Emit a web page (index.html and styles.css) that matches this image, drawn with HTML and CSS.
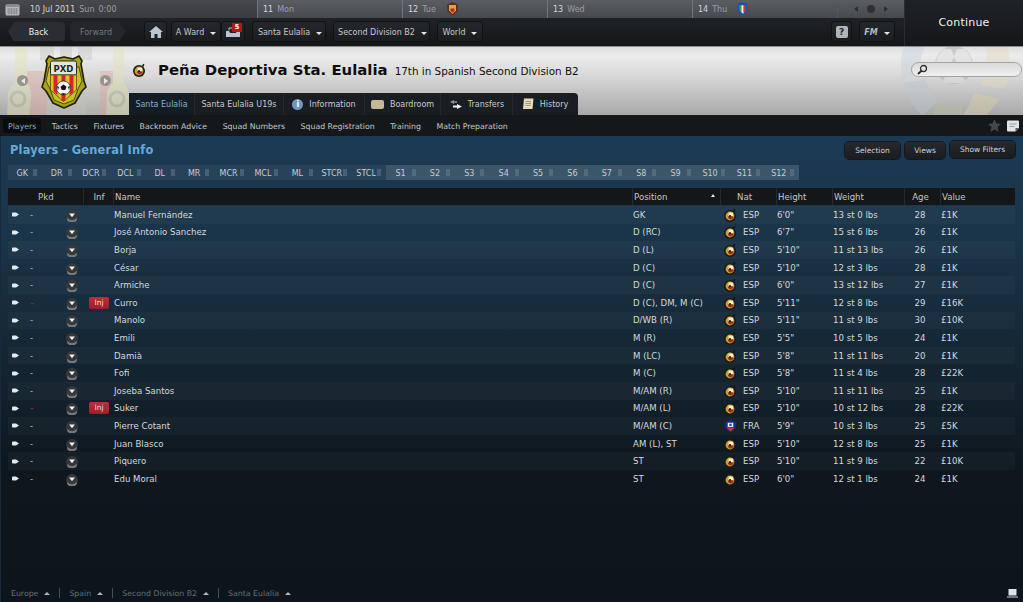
FILE: index.html
```html
<!DOCTYPE html>
<html lang="en">
<head>
<meta charset="utf-8">
<title>Players - General Info</title>
<link rel="stylesheet" href="styles.css">
</head>
<body>
<svg class="defs" width="0" height="0" aria-hidden="true">
  <symbol id="esp" viewBox="0 0 13 14">
    <path d="M9 3 10.200.8l1.200.7L10.200 4z" fill="#15130f"/>
    <circle cx="6" cy="8" r="6" fill="#1c1a12"/>
    <circle cx="6" cy="8" r="4.400" fill="#c4a42a"/>
    <path d="M4 8.500h5.500v1.400L6.500 11.800 4 10.100z" fill="#a8262c"/>
    <path d="M4.600 4.600H9.200v3.400H4.600z" fill="#f4eed6"/>
    <circle cx="6" cy="8.200" r="1.100" fill="#1d1a16"/>
  </symbol>
  <symbol id="fra" viewBox="0 0 14 14">
    <path d="M7 0 10 2l3.500 1-.5 6L7 14 1 9 .5 3l3.500-1z" fill="#152c86"/>
    <path d="M2.500 8.500h9L7 13z" fill="#d02c40"/>
    <path d="M4 3.500h6v4.500H4z" fill="#eef1f8"/>
    <path d="M5.700 4.500h2.600v2.500H5.700z" fill="#2c4ab0"/>
  </symbol>
  <symbol id="dd" viewBox="0 0 10 10">
    <circle cx="5" cy="5" r="5" fill="#35383b"/>
    <path d="M1 6.500a5 5 0 0 0 8 0L9 8.500a5 5 0 0 1-8 0z" fill="#77797b"/>
    <path d="M2.600 3h4.800L5 6z" fill="#f2f2f2"/>
  </symbol>
  <symbol id="row" viewBox="0 0 7 5">
    <path d="M0 1.200Q0 .5.800.5H4L7 2.500 4 4.500H.8Q0 4.500 0 3.800z" fill="#e6e9ec"/>
  </symbol>
</svg>

<div class="top">
  <div class="top-main">
    <div class="calendar">
      <div class="day day-first">
        <svg class="cal-icon" width="15" height="12" viewBox="0 0 15 12"><rect x=".5" y=".5" width="14" height="11" rx="1.500" fill="#b4b8bb"/><rect x=".5" y=".5" width="14" height="2.500" rx="1" fill="#8a8e91"/><path d="M2 5h11M2 7h11M2 9h11M4 4v6.500M6.500 4v6.500M9 4v6.500M11.500 4v6.500" stroke="#7d8184" stroke-width=".7"/></svg>
        <b>10 Jul 2011</b><span>Sun</span><span>0:00</span>
      </div>
      <div class="day day-a"><b>11</b><span>Mon</span></div>
      <div class="day day-a"><b>12</b><span>Tue</span>
        <svg class="match" width="13" height="14" viewBox="0 0 12 14"><path d="M6 .3 9 1.300l2.500 1.500-.5 6.500L6 13.800 1 9.300.5 2.800l2.500-1.500z" fill="#5e2c18"/><path d="M2.500 3h7v5.500L6 12 2.500 8.500z" fill="#dcaa2c"/><path d="M4 6.500h4v2.300L6 10.800 4 8.800z" fill="#bb262a"/></svg>
      </div>
      <div class="day day-a"><b>13</b><span>Wed</span></div>
      <div class="day day-a day-flag"><b>14</b><span>Thu</span>
        <svg class="match" width="11" height="14" viewBox="0 0 10 14"><path d="M.3 1.300 5 .2l4.700 1.100v8.200L5 13.800.3 9.500z" fill="#1f4fb0"/><path d="M1.800 3.200h2.200v7.300L1.800 9z" fill="#2f9e50"/><path d="M4 3.200h2.100v8.500L4 10.500z" fill="#f4f4f4"/><path d="M6.100 3.200h2.200V9l-2.200 1.700z" fill="#cf3039"/></svg>
      </div>
      <div class="pager">
        <i class="tri-l"></i><i class="dot"></i><i class="tri-r"></i>
      </div>
    </div>
    <nav class="navbar">
      <a class="nbtn back">Back</a>
      <a class="nbtn forward">Forward</a>
      <a class="nbtn home"><svg width="14" height="12" viewBox="0 0 14 12"><path d="M7 0 14 6h-2v6H8.500V8h-3v4H2V6H0z" fill="#b9c6d2"/></svg></a>
      <a class="nbtn ward">A Ward<i class="caret"></i></a>
      <a class="nbtn inbox"><svg width="14" height="10" viewBox="0 0 14 10"><path d="M0 4h3l1 2h6l1-2h3v6H0z" fill="#b9c6d2"/><path d="M3 3.500V1h8v2.500" fill="none" stroke="#b9c6d2"/></svg><em class="badge">5</em></a>
      <a class="nbtn club">Santa Eulalia<i class="caret"></i></a>
      <a class="nbtn league">Second Division B2<i class="caret"></i></a>
      <a class="nbtn world">World<i class="caret"></i></a>
      <span class="grow"></span>
      <a class="nbtn help"><span class="q">?</span></a>
      <a class="nbtn fm"><b>FM</b><i class="caret"></i></a>
    </nav>
  </div>
  <div class="continue">Continue</div>
</div>

<header class="hero">
  <svg class="ghost-left" width="130" height="69" viewBox="0 0 130 69">
    <path d="M27 24h20v45H27zM100 24h13v45h-13z" fill="#e2a8a0"/>
    <path d="M47 24h53v45H47z" fill="#dcdcb4" opacity=".35"/>
    <path d="M15 0h12v36q5 6 4 14l-2 19H7l1-19q-1-8 7-14z" fill="#e4e4b0"/>
    <path d="M113 0h11v36q5 6 5 14v19H106l1-19q-1-8 6-14z" fill="#e4e4b0"/>
    <circle cx="18" cy="52" r="7" fill="none" stroke="#b4b49a" stroke-width="3"/>
    <circle cx="117" cy="52" r="7" fill="none" stroke="#b4b49a" stroke-width="3"/>
    <circle cx="66" cy="63" r="20" fill="#c8c8c2"/>
    <path d="M40 0h14v13H40zM60 0h12v13H60zM78 0h14v13H78z" fill="#c6c6c2"/>
  </svg>
  <svg class="ghost-right" width="123" height="69" viewBox="0 0 123 69">
    <path d="M3 0h22a40 40 0 0 0-4 26L2 32Q0 15 3 0z" fill="#c2d0dc"/>
    <path d="M86 0h22q4 20-2 42l-26-4q8-16 6-38z" fill="#e6d8bc"/>
    <path d="M4 36 26 32q4 14 12 22L22 69Q8 55 4 36z" fill="#b8c6d0"/>
    <path d="M74 46l26 6Q92 62 86 69H62q8-10 12-23z" fill="#dccfa6"/>
    <path d="M38 56q14 6 24 0v13H32z" fill="#b4c09c"/>
    <circle cx="54" cy="18" r="19" fill="#a8a8a8"/>
    <path d="M44 2h7l3 8-4 8H36q0-10 8-16zM57 2h7q8 6 8 16H58l-4-8zM46 28h16l4 8H42z" fill="#dedede"/>
  </svg>
  <div class="hero-crest">
    <i class="arrow-btn"><span class="tri-l dark"></span></i>
    <svg class="crest" width="46" height="56" viewBox="0 0 46 56">
      <path d="M5 8 8 3 14 6 23 4 32 6 38 3 41 8 40 11 43 28 45 34 41 38 34 50 23 55 12 50 5 38 1 34 3 28 6 11z" fill="#a8a418" stroke="#1e1e0c" stroke-width="1.600" stroke-linejoin="round"/>
      <path d="M5 28 9 36 13 47 23 51 33 47 37 36 41 28 38 14 8 14z" fill="#c8c41e" stroke="#2c2c10" stroke-width=".8"/>
      <rect x="9.500" y="8" width="26" height="14" rx="1.500" fill="#e4e4df" stroke="#26261a"/>
      <text x="22.500" y="19" text-anchor="middle" class="pxd">PXD</text>
      <path d="M9.500 22h26v15l-13 11.500L9.500 37z" fill="#e2c020" stroke="#26261a" stroke-width=".6"/>
      <path d="M12.500 22h4v20l-4-3.500zM20.500 22h4v26h-4zM28.500 22h4v17l-4 3.500z" fill="#d6262c"/>
      <circle cx="22.500" cy="35" r="7" fill="#f4f4f4" stroke="#222" stroke-width=".7"/>
      <path d="M22.500 31.500l3 2.200-1.200 3.400h-3.600L19.500 33.700zM16 33l2 1-1 3zM29 33l-2 1 1 3zM19.500 41l3-1 3 1-3 1z" fill="#161616"/>
    </svg>
    <i class="arrow-btn"><span class="tri-r dark"></span></i>
  </div>
  <div class="hero-main">
    <div class="title-row">
      <svg class="fed" width="13" height="14"><use href="#esp"/></svg>
      <h1>Peña Deportiva Sta. Eulalia</h1>
      <span class="sub">17th in Spanish Second Division B2</span>
    </div>
    <div class="tabs">
      <a class="tab on">Santa Eulalia</a>
      <a class="tab">Santa Eulalia U19s</a>
      <a class="tab tab-i"><i class="info">i</i>Information</a>
      <a class="tab tab-i"><i class="room"></i>Boardroom</a>
      <a class="tab tab-i"><svg width="13" height="11" viewBox="0 0 13 11"><path d="M5 1 1 3l4 2V3.800h3V2.200H5z" fill="#8d9094"/><path d="M8 5l5 2.500L8 10V8.500H4V6.500h4z" fill="#eef0f2"/></svg>Transfers</a>
      <a class="tab tab-i"><svg width="11" height="13" viewBox="0 0 11 13"><path d="M1 .5h9.500L9.500 11H0z" fill="#e4dcb8"/><path d="M2.500 3.500h5.500M2.500 5.500h5.500M2.500 7.500h5" stroke="#8c8670" stroke-width=".8"/></svg>History</a>
    </div>
  </div>
  <div class="search"><svg width="11" height="11" viewBox="0 0 11 11"><circle cx="6.500" cy="4.500" r="3" fill="none" stroke="#333" stroke-width="1.300"/><path d="M4.300 6.800 1 10" stroke="#222" stroke-width="1.800"/></svg></div>
</header>

<div class="subnav">
  <a class="sub-on">Players</a><a>Tactics</a><a>Fixtures</a><a>Backroom Advice</a><a>Squad Numbers</a><a>Squad Registration</a><a>Training</a><a>Match Preparation</a>
  <span class="grow"></span>
  <svg width="13" height="13" viewBox="0 0 13 13"><path d="M6.500 0 8.400 4.500 13 5 9.500 8l1.100 5-4.100-2.600L2.400 13l1.100-5L0 5l4.600-.5z" fill="#45484b"/></svg>
  <svg class="note" width="12" height="12" viewBox="0 0 12 12"><path d="M0 1.500Q0 .5 1 .5h10q1 0 1 1V8L8.500 11.500H1q-1 0-1-1z" fill="#dfe4e8"/><path d="M2.500 4h7M2.500 6.500h5" stroke="#9aa0a5"/><path d="M8.500 11.500V8H12z" fill="#55595c"/></svg>
</div>

<main class="content">
  <div class="title-bar">
    <h2>Players - General Info</h2>
    <div class="actions">
      <a class="act act-sel">Selection</a><a class="act act-views">Views</a><a class="act act-filter">Show Filters</a>
    </div>
  </div>
  <div class="strip">
    <span>GK</span><span>DR</span><span>DCR</span><span>DCL</span><span>DL</span><span>MR</span><span>MCR</span><span>MCL</span><span>ML</span><span>STCR</span><span>STCL</span>
    <span class="s">S1</span><span class="s">S2</span><span class="s">S3</span><span class="s">S4</span><span class="s">S5</span><span class="s">S6</span><span class="s">S7</span><span class="s">S8</span><span class="s">S9</span><span class="s">S10</span><span class="s">S11</span><span class="s">S12</span>
  </div>
  <div class="table">
    <div class="row head">
      <span></span><span class="c-pkd">Pkd</span><span></span><span class="c-inf">Inf</span><span class="sep">Name</span><span class="sep c-pos">Position<i class="sort"></i></span><span class="sep c-nat">Nat</span><span class="sep">Height</span><span class="sep">Weight</span><span class="sep c-age">Age</span><span class="sep">Value</span>
    </div>
    <div class="row"><span class="c-go"><svg width="7" height="5"><use href="#row"/></svg></span><span class="c-dash">-</span><span class="c-dd"><svg width="12" height="12"><use href="#dd"/></svg></span><span></span><span>Manuel Fernández</span><span>GK</span><span class="c-flag"><svg width="13" height="14"><use href="#esp"/></svg>ESP</span><span>6'0"</span><span>13 st 0 lbs</span><span class="c-age">28</span><span>£1K</span></div>
    <div class="row"><span class="c-go"><svg width="7" height="5"><use href="#row"/></svg></span><span class="c-dash">-</span><span class="c-dd"><svg width="12" height="12"><use href="#dd"/></svg></span><span></span><span>José Antonio Sanchez</span><span>D (RC)</span><span class="c-flag"><svg width="13" height="14"><use href="#esp"/></svg>ESP</span><span>6'7"</span><span>15 st 6 lbs</span><span class="c-age">26</span><span>£1K</span></div>
    <div class="row"><span class="c-go"><svg width="7" height="5"><use href="#row"/></svg></span><span class="c-dash">-</span><span class="c-dd"><svg width="12" height="12"><use href="#dd"/></svg></span><span></span><span>Borja</span><span>D (L)</span><span class="c-flag"><svg width="13" height="14"><use href="#esp"/></svg>ESP</span><span>5'10"</span><span>11 st 13 lbs</span><span class="c-age">26</span><span>£1K</span></div>
    <div class="row"><span class="c-go"><svg width="7" height="5"><use href="#row"/></svg></span><span class="c-dash">-</span><span class="c-dd"><svg width="12" height="12"><use href="#dd"/></svg></span><span></span><span>César</span><span>D (C)</span><span class="c-flag"><svg width="13" height="14"><use href="#esp"/></svg>ESP</span><span>5'10"</span><span>12 st 3 lbs</span><span class="c-age">28</span><span>£1K</span></div>
    <div class="row"><span class="c-go"><svg width="7" height="5"><use href="#row"/></svg></span><span class="c-dash">-</span><span class="c-dd"><svg width="12" height="12"><use href="#dd"/></svg></span><span></span><span>Armiche</span><span>D (C)</span><span class="c-flag"><svg width="13" height="14"><use href="#esp"/></svg>ESP</span><span>6'0"</span><span>13 st 12 lbs</span><span class="c-age">27</span><span>£1K</span></div>
    <div class="row"><span class="c-go"><svg width="7" height="5"><use href="#row"/></svg></span><span class="c-dash red">-</span><span class="c-dd"><svg width="12" height="12"><use href="#dd"/></svg></span><span class="c-inj"><em>Inj</em></span><span>Curro</span><span>D (C), DM, M (C)</span><span class="c-flag"><svg width="13" height="14"><use href="#esp"/></svg>ESP</span><span>5'11"</span><span>12 st 8 lbs</span><span class="c-age">29</span><span>£16K</span></div>
    <div class="row"><span class="c-go"><svg width="7" height="5"><use href="#row"/></svg></span><span class="c-dash">-</span><span class="c-dd"><svg width="12" height="12"><use href="#dd"/></svg></span><span></span><span>Manolo</span><span>D/WB (R)</span><span class="c-flag"><svg width="13" height="14"><use href="#esp"/></svg>ESP</span><span>5'11"</span><span>11 st 9 lbs</span><span class="c-age">30</span><span>£10K</span></div>
    <div class="row"><span class="c-go"><svg width="7" height="5"><use href="#row"/></svg></span><span class="c-dash">-</span><span class="c-dd"><svg width="12" height="12"><use href="#dd"/></svg></span><span></span><span>Emili</span><span>M (R)</span><span class="c-flag"><svg width="13" height="14"><use href="#esp"/></svg>ESP</span><span>5'5"</span><span>10 st 5 lbs</span><span class="c-age">24</span><span>£1K</span></div>
    <div class="row"><span class="c-go"><svg width="7" height="5"><use href="#row"/></svg></span><span class="c-dash">-</span><span class="c-dd"><svg width="12" height="12"><use href="#dd"/></svg></span><span></span><span>Damià</span><span>M (LC)</span><span class="c-flag"><svg width="13" height="14"><use href="#esp"/></svg>ESP</span><span>5'8"</span><span>11 st 11 lbs</span><span class="c-age">20</span><span>£1K</span></div>
    <div class="row"><span class="c-go"><svg width="7" height="5"><use href="#row"/></svg></span><span class="c-dash">-</span><span class="c-dd"><svg width="12" height="12"><use href="#dd"/></svg></span><span></span><span>Fofi</span><span>M (C)</span><span class="c-flag"><svg width="13" height="14"><use href="#esp"/></svg>ESP</span><span>5'8"</span><span>11 st 4 lbs</span><span class="c-age">28</span><span>£22K</span></div>
    <div class="row"><span class="c-go"><svg width="7" height="5"><use href="#row"/></svg></span><span class="c-dash">-</span><span class="c-dd"><svg width="12" height="12"><use href="#dd"/></svg></span><span></span><span>Joseba Santos</span><span>M/AM (R)</span><span class="c-flag"><svg width="13" height="14"><use href="#esp"/></svg>ESP</span><span>5'10"</span><span>11 st 11 lbs</span><span class="c-age">25</span><span>£1K</span></div>
    <div class="row"><span class="c-go"><svg width="7" height="5"><use href="#row"/></svg></span><span class="c-dash red">-</span><span class="c-dd"><svg width="12" height="12"><use href="#dd"/></svg></span><span class="c-inj"><em>Inj</em></span><span>Suker</span><span>M/AM (L)</span><span class="c-flag"><svg width="13" height="14"><use href="#esp"/></svg>ESP</span><span>5'10"</span><span>10 st 12 lbs</span><span class="c-age">28</span><span>£22K</span></div>
    <div class="row"><span class="c-go"><svg width="7" height="5"><use href="#row"/></svg></span><span class="c-dash">-</span><span class="c-dd"><svg width="12" height="12"><use href="#dd"/></svg></span><span></span><span>Pierre Cotant</span><span>M/AM (C)</span><span class="c-flag"><svg width="13" height="14"><use href="#fra"/></svg>FRA</span><span>5'9"</span><span>10 st 3 lbs</span><span class="c-age">25</span><span>£5K</span></div>
    <div class="row"><span class="c-go"><svg width="7" height="5"><use href="#row"/></svg></span><span class="c-dash">-</span><span class="c-dd"><svg width="12" height="12"><use href="#dd"/></svg></span><span></span><span>Juan Blasco</span><span>AM (L), ST</span><span class="c-flag"><svg width="13" height="14"><use href="#esp"/></svg>ESP</span><span>5'10"</span><span>12 st 8 lbs</span><span class="c-age">25</span><span>£1K</span></div>
    <div class="row"><span class="c-go"><svg width="7" height="5"><use href="#row"/></svg></span><span class="c-dash">-</span><span class="c-dd"><svg width="12" height="12"><use href="#dd"/></svg></span><span></span><span>Piquero</span><span>ST</span><span class="c-flag"><svg width="13" height="14"><use href="#esp"/></svg>ESP</span><span>5'10"</span><span>11 st 9 lbs</span><span class="c-age">22</span><span>£10K</span></div>
    <div class="row"><span class="c-go"><svg width="7" height="5"><use href="#row"/></svg></span><span class="c-dash">-</span><span class="c-dd"><svg width="12" height="12"><use href="#dd"/></svg></span><span></span><span>Edu Moral</span><span>ST</span><span class="c-flag"><svg width="13" height="14"><use href="#esp"/></svg>ESP</span><span>6'0"</span><span>12 st 1 lbs</span><span class="c-age">24</span><span>£1K</span></div>
  </div>
  <footer class="crumbs">
    <a>Europe<i class="up"></i></a><a>Spain<i class="up"></i></a><a>Second Division B2<i class="up"></i></a><a>Santa Eulalia<i class="up"></i></a>
    <span class="grow"></span>
    <svg class="laptop" width="11" height="9" viewBox="0 0 11 9"><rect x="1.500" y="0" width="8" height="6.500" fill="#dfe3e6"/><path d="M0 8h11" stroke="#8d9398" stroke-width="1.500"/></svg>
  </footer>
</main>
</body>
</html>
```
FILE: styles.css
```css
* { box-sizing: border-box; }
html, body { margin: 0; padding: 0; }
body {
  width: 1023px;
  height: 602px;
  overflow: hidden;
  background: #0d151c;
  font-family: "DejaVu Sans", sans-serif;
  font-size: 8.5px;
  color: #d5d9dc;
  display: flex;
  flex-direction: column;
}
.defs { position: absolute; }
a { display: flex; align-items: center; }
i, em { font-style: normal; }
.grow { flex: 1; }

/* top */
.top { display: flex; height: 46px; flex: none; }
.top-main { width: 904px; display: flex; flex-direction: column; }
.calendar { height: 18px; display: flex; background: #4b4e52; }
.day {
  display: flex;
  align-items: center;
  gap: 4px;
  width: 145px;
  padding: 1px 0 0 5px;
  color: #9c9fa3;
  font-size: 8px;
  border-left: 1px solid #71767b;
  background: linear-gradient(#5a5e63, #46494d);
}
.day b { font-weight: normal; color: #d4d6d8; }
.day-first {
  width: 257px;
  border-left: 0;
  padding-left: 5px;
  background: linear-gradient(#46484b, #393b3e);
}
.day-first b { margin-left: 6px; }
.day-flag { width: 145px; }
.match { margin-left: 6px; margin-top: -1px; }
.pager {
  flex: 1;
  display: flex;
  align-items: center;
  justify-content: center;
  gap: 9px;
  background: linear-gradient(#5a5e63, #46494d);
  border-left: 1px solid #55595d;
}
.tri-l { width: 0; height: 0; border: 3px solid transparent; border-left: 0; border-right: 4px solid #2d2f31; }
.tri-r { width: 0; height: 0; border: 3px solid transparent; border-right: 0; border-left: 4px solid #2d2f31; }
.dot { width: 8px; height: 8px; border-radius: 50%; background: #2d2f31; }
.navbar {
  flex: 1;
  display: flex;
  align-items: center;
  padding: 0 10px 0 8px;
  background: linear-gradient(#1f2226, #14161a);
}
.nbtn {
  height: 19px;
  margin-top: -1px;
  padding-top: 1px;
  justify-content: center;
  border-radius: 3px;
  background: linear-gradient(#24272b, #1a1c20);
  box-shadow: 0 0 0 1px #101214;
  color: #c6c9cc;
  font-size: 8px;
  position: relative;
}
.back {
  width: 57px; padding-left: 4px; color: #eef0f1;
  clip-path: polygon(0 50%, 10% 0, 100% 0, 100% 100%, 10% 100%);
  background: #2a2e32;
}
.forward {
  width: 56px; margin-left: 5px; padding-right: 4px; color: #75787b;
  clip-path: polygon(0 0, 88% 0, 100% 50%, 88% 100%, 0 100%);
  background: #24272b;
}
.home { width: 21px; margin-left: 19px; }
.ward { width: 48px; margin-left: 6px; }
.inbox { width: 22px; margin-left: 2px; }
.club { width: 72px; margin-left: 9px; padding-left: 2px; }
.league { width: 95px; margin-left: 9px; padding-left: 2px; }
.world { width: 44px; margin-left: 9px; }
.help { width: 19px; }
.fm { width: 34px; margin-left: 9px; }
.fm b { font-style: italic; font-size: 8px; color: #b5bbc0; }
.q {
  width: 12px; height: 12px; line-height: 12px; text-align: center;
  background: #aeb6bc; color: #23262a; font-weight: bold; font-size: 9px; border-radius: 2px;
}
.caret {
  width: 0; height: 0; margin-left: 6px; margin-top: 2px;
  border: 3px solid transparent; border-bottom: 0; border-top: 3px solid #e4e6e8;
}
.badge {
  position: absolute; right: 2px; top: 1px;
  width: 10px; height: 9px; line-height: 9px; text-align: center;
  background: #b4161e; color: #fff; font-size: 6.5px; font-weight: bold; border-radius: 1px;
}
.continue {
  flex: 1;
  display: flex; align-items: center; justify-content: center;
  background: linear-gradient(#1f2226, #15171a);
  color: #f0f1f2;
  font-size: 11px;
  letter-spacing: .2px;
  padding-bottom: 2px;
  border-left: 1px solid #2a2d30;
}

/* hero */
.hero {
  height: 69px; flex: none;
  display: flex;
  position: relative;
  overflow: hidden;
  background: linear-gradient(#dedede 0, #ececec 12%, #dadada 40%, #a8a8a8 100%);
  border-top: 1px solid #8d8d8d;
}
.ghost-left { position: absolute; left: 0; top: 0; opacity: .42; }
.ghost-right { position: absolute; left: 900px; top: 0; opacity: .42; }
.hero-crest {
  width: 129px; flex: none; position: relative;
  display: flex; align-items: flex-start; justify-content: flex-start;
  gap: 13px; padding: 6px 0 0 17px;
}
.crest { flex: none; }
.pxd { font: bold 8.5px "DejaVu Sans", sans-serif; fill: #1e1e1e; }
.arrow-btn {
  width: 11px; height: 11px; margin-top: 22px; border-radius: 50%;
  background: #9a928c; display: flex; align-items: center; justify-content: center;
}
.tri-l.dark { border-right-color: #e8e8e8; }
.tri-r.dark { border-left-color: #e8e8e8; }
.hero-main { flex: 1; display: flex; flex-direction: column; position: relative; }
.title-row { height: 47px; display: flex; align-items: center; padding: 0 0 0 4px; color: #0d0d0d; }
h1 { margin: 0 0 0 12px; font-size: 14.9px; font-weight: bold; }
.sub { margin-left: 7px; font-size: 10.4px; padding-top: 2px; }
.tabs {
  width: 449px; height: 22px;
  display: flex; align-items: stretch;
  background: #1a1d21;
  border-radius: 4px 4px 0 0;
  font-size: 8px;
}
.tab {
  justify-content: center; gap: 6px;
  color: #c8cbce;
  border-right: 1px solid #26292d;
  flex: none;
}
.tab.on { color: #7fb0d4; background: #141d25; width: 66px; }
.tab:nth-child(2) { width: 89px; }
.tab:nth-child(3) { width: 81px; }
.tab:nth-child(4) { width: 76px; }
.tab:nth-child(5) { width: 72px; }
.tab:nth-child(6) { flex: 1; border-right: 0; }
.info {
  width: 11px; height: 11px; line-height: 11px; border-radius: 50%; text-align: center;
  background: #7197bd; color: #fff; font-weight: bold; font-size: 8px;
}
.room { width: 13px; height: 9px; border-radius: 2px; background: #c4b894; }
.search {
  position: absolute; right: 1px; top: 15px;
  width: 111px; height: 15px; border-radius: 8px;
  background: linear-gradient(#dadada, #f0f0f0);
  border: 1px solid #a4a4a4;
  display: flex; align-items: center; padding-left: 5px;
}

/* sub nav */
.subnav {
  height: 21px; flex: none;
  display: flex; align-items: center;
  background: #15181b;
  padding: 0 4px 0 3px;
  color: #c4c8cb;
  font-size: 7.8px;
}
.subnav a { height: 15px; padding: 2px 5px 0; margin-right: 5.5px; white-space: nowrap; }
.subnav .sub-on { background: #0b0c0e; color: #85aece; border-radius: 3px; }
.note { margin-left: 6px; }

/* content */
.content {
  flex: 1;
  display: flex; flex-direction: column;
  padding: 0 8px 0 8px;
  background: linear-gradient(#1b3a53 0, #1a3448 22%, #13232f 52%, #0e171e 72%, #0d151c 100%);
  border-left: 1px solid #17293a;
}
.title-bar { height: 29px; display: flex; justify-content: space-between; padding: 6px 0 0 2px; flex: none; margin-left: -1px; }
h2 { margin: 0; font-size: 11.4px; font-weight: bold; color: #68a9d8; line-height: 17px; letter-spacing: .2px; }
.actions { display: flex; gap: 5px; margin-top: -1px; }
.act {
  height: 17px; justify-content: center; font-size: 7.5px; color: #d0d3d6;
  background: linear-gradient(#26292d, #1a1c1f); border-radius: 4px; box-shadow: 0 0 0 1px #0f1a22;
}
.act-sel { width: 55px; margin-top: 1px; }
.act-views { width: 40px; margin-top: 1px; }
.act-filter { width: 65px; }
.strip {
  display: flex; width: 791px; height: 15px; flex: none;
  margin-left: -1px;
  background: #2a4560;
}
.strip span {
  flex: 1; display: flex; align-items: center; justify-content: center;
  font-size: 8px; color: #c6ccd1; padding: 1px 6px 0 0;
  background: #28425a; position: relative;
}
.strip .s { background: #3b5669; }
.strip span::after {
  content: ""; position: absolute; right: 5px; top: 4px; width: 4px; height: 7px;
  background: radial-gradient(circle, #6e8396 .6px, transparent .8px) 0 0 / 2px 2px;
}
.table { margin-top: 8px; margin-left: -1px; width: 1007px; }
.row {
  display: grid;
  grid-template-columns: 16px 36px 23px 30px 519px 88px 56px 56px 72px 36px 75px;
  height: 17.6px;
  align-items: center;
  font-size: 8.6px;
  color: #d5d9dc;
  white-space: nowrap;
}
.row:nth-child(even) { background: rgba(255, 255, 255, .028); }
.row > span { padding-left: 1px; }
.head {
  height: 17px;
  background: #141618;
  color: #c5c8ca;
  font-size: 8.6px;
  margin-bottom: 1px;
  align-items: stretch;
}
.head > span { display: flex; align-items: center; }
.head .sep { border-left: 1px solid #26292c; }
.head .c-inf { border-left: 1px solid #26292c; justify-content: center; }
.head .c-pkd { padding-left: 14px; }
.head .c-pos { position: relative; }
.head .c-nat { justify-content: center; padding-right: 20px; padding-left: 12px; }
.head .c-age { justify-content: center; padding: 0 4px 0 0; }
.sort {
  position: absolute; right: 5px; top: 6px; width: 0; height: 0;
  border: 2px solid transparent; border-top: 0; border-bottom: 3px solid #e8e8e8;
}
.row > .c-go { padding-left: 4px; display: flex; }
.row > .c-dash { padding-left: 6px; color: #b4b9bd; }
.row > .red { color: #8a2028; font-weight: bold; }
.row > .c-dd { padding: 2px 0 0 0; display: flex; margin-left: 6px; }
.row > .c-inj { display: flex; justify-content: center; }
.c-inj em {
  width: 20px; height: 12px; line-height: 12px; text-align: center;
  font-size: 7.5px; color: #eedddd; border-radius: 2px;
  background: linear-gradient(#bd2f38, #98202a);
  margin-right: -1px;
}
.row > .c-flag { display: flex; align-items: center; gap: 6px; padding-left: 4px; }
.row > .c-age { text-align: center; padding: 0 4px 0 0; }
.crumbs {
  margin-top: auto;
  height: 22px;
  display: flex; align-items: center;
  font-size: 7.8px; color: #656d73;
  margin-left: -1px;
  padding: 4px 0 0 3px;
}
.crumbs a { padding-right: 9px; margin-right: 9px; border-right: 1px solid #465058; height: 10px; }
.crumbs a:nth-of-type(4) { border-right: 0; }
.up {
  width: 0; height: 0; margin-left: 6px;
  border: 3px solid transparent; border-top: 0; border-bottom: 3px solid #b3b8bc;
}
.laptop { margin: 0 -3px 0 0; }
```
